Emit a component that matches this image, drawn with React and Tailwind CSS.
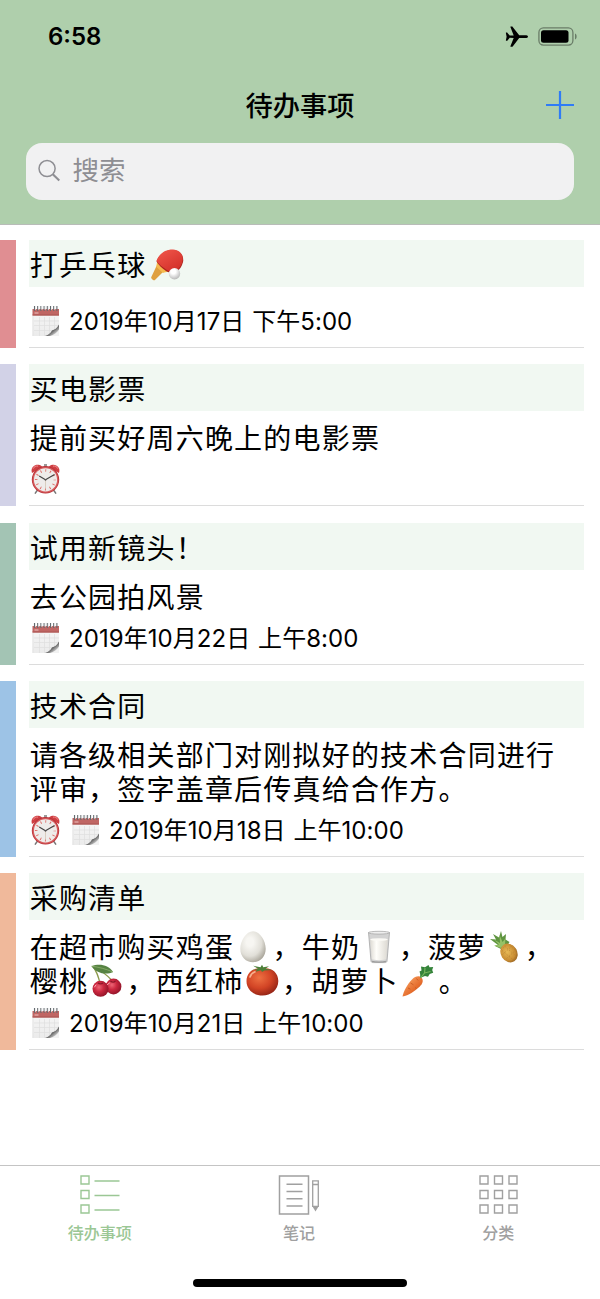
import { useState } from "react";

function PlaneIcon() {
  return (
    <svg width="24" height="22" viewBox="0 0 24 22" fill="#000">
      <path d="M23 10.700c0 .9-1.200 1.400-2.800 1.400h-6L7.700 20.400c-.2.300-.4.400-.7.400H5.900c-.4 0-.6-.3-.4-.7l3.200-8.100-4-.2-2.200 2.700c-.2.200-.4.300-.6.300H1.300c-.3 0-.5-.2-.4-.5l.7-3.600L.9 7.100c-.1-.3.100-.5.400-.5h.6c.2 0 .4.100.6.300l2.200 2.700 4-.2-3.200-8.100c-.2-.4 0-.7.4-.7H7c.3 0 .5.1.7.4l6.500 8.300h6c1.600 0 2.800.5 2.800 1.400z" />
    </svg>
  );
}

function BatteryIcon() {
  return (
    <svg width="39" height="19" viewBox="0 0 39 19">
      <rect x="0.9" y="0.900" width="34" height="17.200" rx="4.500" fill="none" stroke="#000" strokeOpacity="0.4" strokeWidth="1.300" />
      <rect x="3" y="3.200" width="27.500" height="12.600" rx="2.500" fill="#000" />
      <path d="M37 6.500c1.400.6 1.600 1.700 1.600 3s-.2 2.400-1.600 3z" fill="#000" fillOpacity="0.4" />
    </svg>
  );
}

function SearchIcon() {
  return (
    <svg width="24" height="24" viewBox="0 0 24 24" fill="none" stroke="#8e8e93">
      <circle cx="9.700" cy="9.400" r="8.600" strokeWidth="1.600" />
      <path d="M15.800 15.500l7 6.700" strokeWidth="2.300" />
    </svg>
  );
}

function CalendarIcon() {
  return (
    <svg width="30" height="32" viewBox="0 0 30 32">
      <defs>
        <linearGradient id="calPaper" x1="0" y1="0" x2="0" y2="1">
          <stop offset="0" stopColor="#f7f7f7" />
          <stop offset="1" stopColor="#ebebeb" />
        </linearGradient>
        <linearGradient id="calCurl" x1="0" y1="0" x2="1" y2="1">
          <stop offset="0.3" stopColor="#dcdcdc" />
          <stop offset="0.5" stopColor="#505050" />
          <stop offset="0.75" stopColor="#bdbdbd" />
        </linearGradient>
      </defs>
      <path d="M1.500 4h26.500v27H1.500z" fill="url(#calPaper)" />
      <path d="M2 11v20M8.500 12v19M13.500 12v19M18.500 12v19M23.500 12v14M3 16h25M3 20.500h25M3 25.500h22" stroke="#dedede" strokeWidth="0.700" />
      <path d="M1.500 4h26.500v6.500H1.500z" fill="#c06664" />
      <path d="M1.500 9.500h26.500v1H1.500z" fill="#ab5553" />
      <path d="M3.500 8h4" stroke="#e6b3b0" strokeWidth="1.200" />
      <path d="M3.500 1v5M6.700 1v5M9.900 1v5M13.100 1v5M16.300 1v5M19.500 1v5M22.700 1v5M25.900 1v5" stroke="#656b6f" strokeWidth="1.100" />
      <path d="M4.600 1v4M7.800 1v4M11 1v4M14.200 1v4M17.400 1v4M20.600 1v4M23.800 1v4" stroke="#e8eaeb" strokeWidth="0.800" />
      <path d="M28 19.500c-2 4-4.500 5.200-7 6-1.500 3-4 4.700-7 5.500h14z" fill="url(#calCurl)" />
      <path d="M28 24.500c-2 3-5 5.500-9 6.500h9z" fill="#f2f2f2" />
    </svg>
  );
}

function AlarmIcon() {
  return (
    <svg width="30" height="32" viewBox="0 0 30 32">
      <path d="M6.500 27l-2.200 3.200M22.500 27l2.200 3.200" stroke="#777" strokeWidth="1.500" strokeLinecap="round" />
      <path d="M13 1h3v5h-3z" fill="#9b9b9b" />
      <path d="M1 10C-.7 5 3 1.200 7.500 1.800c2 .3 3.500 1.200 4 2.700z" fill="#cf3f43" />
      <path d="M28 10c1.700-5-2-8.800-6.500-8.200-2 .3-3.500 1.200-4 2.700z" fill="#cf3f43" />
      <path d="M2 5.800C3 3.600 5 2.800 7 3.100M22 3.100c2-.3 4 .5 5 2.700" stroke="#ef8c8c" strokeWidth="1" fill="none" />
      <circle cx="14.500" cy="16.800" r="13.700" fill="#b93439" />
      <circle cx="14.500" cy="16.800" r="12.900" fill="#d65b5d" />
      <circle cx="14.500" cy="16.800" r="11.600" fill="#eeecea" />
      <circle cx="14.500" cy="16.800" r="9.300" fill="none" stroke="#dd6965" strokeWidth="2.600" strokeDasharray="0.900 3.969" strokeDashoffset="0.450" />
      <path d="M14.500 16.800L8.200 13M14.500 16.800l9-5.200" stroke="#444" strokeWidth="1.100" />
      <path d="M14.500 16.800v9" stroke="#d3c6b4" strokeWidth="0.800" />
      <circle cx="14.500" cy="16.800" r="0.900" fill="#555" />
    </svg>
  );
}

function PingPong() {
  return (
    <svg className="-mt-[7px] mr-[0.5px] inline" width="38" height="34" viewBox="0 0 38 34">
      <defs>
        <linearGradient id="paddle" x1="0" y1="0" x2="0.700" y2="1">
          <stop offset="0" stopColor="#f2594c" />
          <stop offset="1" stopColor="#d3302a" />
        </linearGradient>
        <radialGradient id="ball" cx="0.400" cy="0.300" r="0.700">
          <stop offset="0.300" stopColor="#fff" />
          <stop offset="1" stopColor="#b9b9b9" />
        </radialGradient>
      </defs>
      <path d="M9.500 18l6.500 6-8.300 8.200c-1.200.7-4.200-2-3.400-3.200z" fill="#dfa03f" />
      <path d="M10 13l11.500 10.500c-2 .8-4 .8-5.500 1.500l-7-6.500c.8-1.500 1-3.500 1-5.500z" fill="#f5b94e" />
      <path d="M9.500 13.500C12.500 5.500 19 1.700 26 2c7.500.4 11.200 6.300 10 12-1 4.500-3.500 7.500-6 9.500-4 2-8 1.500-11-.5-3.500-2.500-7.500-6-9.500-9.500z" fill="#a9231e" />
      <path d="M9.500 12.700C12.500 5 19 1.300 26 1.500c7.500.4 10.700 6 9.500 11.500-.8 4.300-3 7-5.500 9-4 2-7.500 1.700-10.500-.3-3.500-2.500-8-5.500-10-9z" fill="url(#paddle)" />
      <circle cx="27.500" cy="25.800" r="5.700" fill="url(#ball)" />
    </svg>
  );
}

function Egg() {
  return (
    <svg className="-mt-[7px] mr-[0.5px] inline" width="38" height="34" viewBox="0 0 38 34">
      <defs>
        <radialGradient id="egg" cx="0.380" cy="0.350" r="0.700">
          <stop offset="0.200" stopColor="#f7f6f2" />
          <stop offset="0.650" stopColor="#e1dfd8" />
          <stop offset="1" stopColor="#aaa69b" />
        </radialGradient>
      </defs>
      <path d="M19 1.200c6.700 0 12.700 9.500 12.700 17.500 0 8.200-5.700 13.500-12.700 13.500S6.300 26.900 6.300 18.700c0-8 6-17.500 12.700-17.500z" fill="url(#egg)" />
    </svg>
  );
}

function Milk() {
  return (
    <svg className="-mt-[7px] mr-[0.5px] inline" width="38" height="34" viewBox="0 0 38 34">
      <defs>
        <linearGradient id="milk" x1="0" y1="0" x2="1" y2="0">
          <stop offset="0" stopColor="#dedbd4" />
          <stop offset="0.350" stopColor="#fffefa" />
          <stop offset="1" stopColor="#dcd9d2" />
        </linearGradient>
      </defs>
      <path d="M8.500 2.500L11 31c.1 1 1 1.600 2 1.600h12c1 0 1.900-.6 2-1.600l2.500-28.500z" fill="#d3d3d3" stroke="#a6a6a6" strokeWidth="0.800" />
      <ellipse cx="19" cy="2.700" rx="10.600" ry="1.400" fill="#eee" stroke="#aaa" strokeWidth="0.800" />
      <path d="M10.200 9.500l1.600 19.500c1 1.500 13.400 1.500 14.400 0l1.600-19.500z" fill="url(#milk)" />
      <ellipse cx="19" cy="9.500" rx="8.800" ry="1.300" fill="#fbfaf6" />
      <path d="M12 31.300c3 1 11 1 14 0" stroke="#888" strokeWidth="0.800" fill="none" />
    </svg>
  );
}

function Pineapple() {
  return (
    <svg className="-mt-[7px] mr-[0.5px] inline" width="38" height="34" viewBox="0 0 38 34">
      <defs>
        <radialGradient id="pine" cx="0.450" cy="0.400" r="0.650">
          <stop offset="0" stopColor="#e7b955" />
          <stop offset="0.700" stopColor="#c98d33" />
          <stop offset="1" stopColor="#8e5b1d" />
        </radialGradient>
      </defs>
      <path d="M15 19l-6-3 3-1-8-6 6 .5L7 4l6 3.500 2-6.500 1.500 6L20 4l-.5 5.500 4 2.500-3 5z" fill="#5f9440" />
      <path d="M15 18l-7-2.500 5-1-5-5 6 3.500L13.500 5l3 7 3-3.500-.5 6z" fill="#95c166" />
      <ellipse cx="23" cy="23" rx="8.200" ry="9.800" transform="rotate(-33 23 23)" fill="url(#pine)" />
      <path d="M16 20.500l12 10M18.500 16l12.500 11M23.500 15l7.500 7M26.500 15.500L16.500 24.500M30.500 19.500L19.500 29.500M31 25L25.500 31.500M20.500 15l-5.500 5" stroke="#a7732b" strokeOpacity="0.550" strokeWidth="0.800" strokeDasharray="1.500 1.500" />
    </svg>
  );
}

function Cherries() {
  return (
    <svg className="-mt-[7px] mr-[0.5px] inline" width="38" height="34" viewBox="0 0 38 34">
      <defs>
        <radialGradient id="cherry" cx="0.400" cy="0.400" r="0.650">
          <stop offset="0" stopColor="#ed6676" />
          <stop offset="0.450" stopColor="#cc2840" />
          <stop offset="1" stopColor="#8e1327" />
        </radialGradient>
      </defs>
      <path d="M5 2.500c3 4 5.500 10 7 17M5.500 2.500c6 3 13 8 19 14.500" fill="none" stroke="#8d9a4c" strokeWidth="1.300" />
      <path d="M3.500 2.200C10.500-.5 20.500.3 25 8 17.500 11.500 8.500 9 3.500 2.200z" fill="#578343" />
      <path d="M3.500 2.200C10.500 3 18 5 25 8" stroke="#8fb36e" strokeWidth="0.800" fill="none" />
      <circle cx="25.500" cy="22.500" r="7.900" fill="url(#cherry)" />
      <circle cx="12.500" cy="24.800" r="8" fill="url(#cherry)" />
      <path d="M10 19c1.500 1 3.500 1 5 0M22.500 17c1.500 1.200 3.500 1.300 5 0" stroke="#8c1729" strokeWidth="1.200" fill="none" />
      <path d="M19.500 20.500l2-1.500M6.500 23l1.500-2" stroke="#ffb3bd" strokeWidth="1" strokeLinecap="round" />
    </svg>
  );
}

function Tomato() {
  return (
    <svg className="-mt-[7px] mr-[0.5px] inline" width="38" height="34" viewBox="0 0 38 34">
      <defs>
        <radialGradient id="tomato" cx="0.400" cy="0.350" r="0.700">
          <stop offset="0" stopColor="#ee7142" />
          <stop offset="0.550" stopColor="#d24425" />
          <stop offset="1" stopColor="#8f2114" />
        </radialGradient>
      </defs>
      <path d="M19.500 4.500c9-1.500 15.800 4 15.800 12.500C35.300 26 28 31.500 19.500 31.500S3.500 26 3.500 17C3.500 8.500 10.500 3 19.500 4.500z" fill="url(#tomato)" />
      <path d="M7 13c.8-2.500 2.500-4.300 5-5.200" stroke="#f7b18f" strokeWidth="1.700" strokeLinecap="round" fill="none" />
      <path d="M8 6.200l7-1.500-4.800-3 7.300 1.600L19 .8l1.300 2.500 5.700-1-3.500 2.500 6.500 1.200-7.500.4-2.500 1.500-1-1.700-5.500 1.500 1.500-2z" fill="#4d7f38" />
    </svg>
  );
}

function Carrot() {
  return (
    <svg className="-mt-[7px] mr-[2px] inline" width="38" height="34" viewBox="0 0 38 34">
      <defs>
        <linearGradient id="carrot" x1="0" y1="0" x2="1" y2="1">
          <stop offset="0.200" stopColor="#f49a5a" />
          <stop offset="0.600" stopColor="#e66d2d" />
          <stop offset="1" stopColor="#b84c18" />
        </linearGradient>
      </defs>
      <path d="M3.500 32.500c1-5.500 5-12.500 9.500-17 3-3 7-4.200 9.300-2 2.500 2.500 1.500 6-1.500 9C15.500 27.500 9.500 31.500 3.500 32.500z" fill="url(#carrot)" />
      <path d="M11.500 19l3 1.800M9 24l2.500 1.200M17.500 14.500l1.600 2M16 23.500l1.500 1" stroke="#c95a21" strokeWidth="0.900" />
      <path d="M21 14c.5-2.500.2-4.500-.5-6.500l2-1-.5-4 4 .7L29.500 1l1 2.200 3.700-.3-1 3.200 1 2.700-3.500 1.200-1.700 2.700-3-.7z" fill="#34833a" />
      <path d="M21.500 14l4-5 .5-5M25.500 9l6-1.500" stroke="#74b45c" strokeWidth="1.200" fill="none" />
    </svg>
  );
}

function ListIcon() {
  return (
    <svg width="42" height="42" viewBox="0 0 42 42" fill="none" stroke="currentColor" strokeWidth="1.400">
      <path d="M2 2h8v8H2zM2 16.500h8v8H2zM2 31h8v8H2zM15.500 7h25M15.500 21.500h25M15.500 36h25" />
    </svg>
  );
}

function NoteIcon() {
  return (
    <svg width="42" height="42" viewBox="0 0 42 42" fill="none" stroke="currentColor" strokeWidth="1.500">
      <path d="M1.500 2h29v38h-29zM8.500 10.300h16M8.500 17.500h16M8.500 24.700h16M8.500 31.900h16" />
      <path d="M34.700 6.800h5.600v25.500h-5.600zM34.700 10.500h5.600" strokeWidth="1.300" />
      <path d="M34.200 32h6.600l-3.300 5.500z" fill="currentColor" stroke="none" />
    </svg>
  );
}

function GridIcon() {
  return (
    <svg width="42" height="42" viewBox="-1 0 42 42" fill="none" stroke="currentColor" strokeWidth="1.400">
      <path d="M2 2h8v8H2zM16.500 2h8v8h-8zM31 2h8v8h-8zM2 16.500h8v8H2zM16.500 16.500h8v8h-8zM31 16.500h8v8h-8zM2 31h8v8H2zM16.500 31h8v8h-8zM31 31h8v8h-8z" />
    </svg>
  );
}

const todos = [
  {
    title: <>打乒乓球<PingPong /></>,
    lines: [],
    date: "2019年10月17日 下午5:00",
    color: "bg-[#e08e92]",
    height: "h-[108px]",
  },
  {
    title: "买电影票",
    lines: ["提前买好周六晚上的电影票"],
    alarm: true,
    color: "bg-[#d2d2e7]",
    height: "h-[142px]",
  },
  {
    title: "试用新镜头！",
    lines: ["去公园拍风景"],
    date: "2019年10月22日 上午8:00",
    color: "bg-[#a3c4b4]",
    height: "h-[142px]",
  },
  {
    title: "技术合同",
    lines: ["请各级相关部门对刚拟好的技术合同进行", "评审，签字盖章后传真给合作方。"],
    alarm: true,
    date: "2019年10月18日 上午10:00",
    color: "bg-[#9dc3e6]",
    height: "h-[176px]",
  },
  {
    title: "采购清单",
    lines: [
      <>在超市购买鸡蛋<Egg />，牛奶<Milk />，菠萝<Pineapple />，</>,
      <>樱桃<Cherries />，西红柿<Tomato />，胡萝卜<Carrot />。</>,
    ],
    date: "2019年10月21日 上午10:00",
    color: "bg-[#f0b99b]",
    height: "h-[177px]",
  },
];

const tabs = [
  { name: "待办事项", icon: <ListIcon /> },
  { name: "笔记", icon: <NoteIcon /> },
  { name: "分类", icon: <GridIcon /> },
];

function TodoItem({ todo }) {
  return (
    <div className={`flex ${todo.height}`}>
      <div className={`w-4 shrink-0 ${todo.color}`}></div>
      <div className="ml-[13px] mr-4 flex flex-1 flex-col border-b border-[#dcdcdc] text-[28px] tracking-[1.2px] whitespace-nowrap">
        <div className="h-[47px] shrink-0 bg-[#f1f8f2] pt-[9px] pl-[0.7px] leading-[34px]">{todo.title}</div>
        {todo.lines.length > 0 && (
          <div className="mt-[11px] pl-[0.7px]">
            {todo.lines.map((line, i) => (
              <div key={i} className="h-[34px] leading-[34px]">
                {line}
              </div>
            ))}
          </div>
        )}
        {/* reminder + due date */}
        <div className="mt-auto mb-[10px] flex h-8 items-center gap-[10px] pl-[2px]">
          {todo.alarm && <AlarmIcon />}
          {todo.date && <CalendarIcon />}
          {todo.date && (
            <span className="-ml-[2px] pt-[2px] text-[24px] tracking-[0.06px] [word-spacing:1px]">{todo.date}</span>
          )}
        </div>
      </div>
    </div>
  );
}

export default function App() {
  const [activeTab, setActiveTab] = useState("待办事项");
  const [keyword, setKeyword] = useState("");

  return (
    <div className="flex h-[1299px] w-[600px] flex-col overflow-hidden bg-white font-['Inter','Noto_Sans_CJK_SC',sans-serif] text-black">
      <header className="h-[225px] shrink-0 border-b border-[#b8bcb8] bg-[#afcfac]">
        <div className="flex h-[73px] items-center justify-between pr-[23px] pl-12">
          <span className="pt-px text-[24px] font-semibold">6:58</span>
          <div className="flex items-center gap-[9px]">
            <PlaneIcon />
            <BatteryIcon />
          </div>
        </div>
        <div className="grid h-[63px] grid-cols-[1fr_auto_1fr] items-center pr-[26px] pl-[26px]">
          <span></span>
          <h1 className="pt-[5px] text-[27.2px] font-medium">待办事项</h1>
          <button className="justify-self-end">
            <svg width="28" height="28" viewBox="0 0 28 28" stroke="#2f7cf6" strokeWidth="2.200">
              <path d="M14 0v28M0 14h28" />
            </svg>
          </button>
        </div>
        <div className="mx-[26px] mt-[6.5px] flex h-[57.5px] items-center gap-3 rounded-[16px] bg-[#f1f1f2] pl-3">
          <SearchIcon />
          <input
            value={keyword}
            onChange={(e) => setKeyword(e.target.value)}
            placeholder="搜索"
            className="w-full bg-transparent text-[26.5px] outline-none placeholder:text-[#8e8e93]"
          />
        </div>
      </header>

      <main className="flex flex-1 flex-col gap-[16.3px] pt-[15px]">
        {todos.map((todo, i) => (
          <TodoItem key={i} todo={todo} />
        ))}
      </main>

      <footer className="flex h-[134px] shrink-0 flex-col border-t border-[#c4c4c4]">
        <div className="mr-0.5 grid grid-cols-3 pt-[8px]">
          {tabs.map((tab) => (
            <button
              key={tab.name}
              onClick={() => setActiveTab(tab.name)}
              className={`flex flex-col items-center ${activeTab === tab.name ? "text-[#9bc795]" : "text-[#a0a0a0]"}`}
            >
              {tab.icon}
              <span className="mt-[5px] text-[16px] leading-6 font-medium">{tab.name}</span>
            </button>
          ))}
        </div>
        <div className="mx-auto mt-auto mb-3 h-2 w-[214px] rounded-full bg-black"></div>
      </footer>
    </div>
  );
}
